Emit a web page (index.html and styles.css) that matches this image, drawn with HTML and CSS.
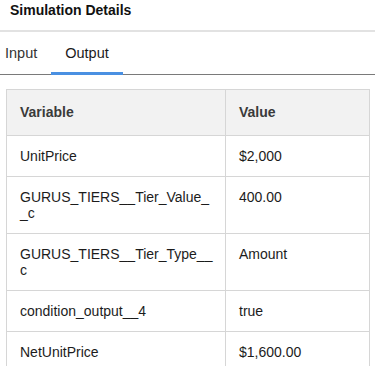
FILE: index.html
```html
<!DOCTYPE html>
<html lang="en">

<head>
    <meta charset="UTF-8">
    <meta name="viewport" content="width=device-width, initial-scale=1.0">
    <title>Simulation Details</title>
    <link rel="stylesheet" href="styles.css">
</head>

<body>

    <div class="panel-header">Simulation Details</div>

    <div class="tab-container">
        <span class="tab">Input</span>
        <span class="tab active">Output</span>
    </div>

    <table class="result-table">
        <thead>
            <tr>
                <th class="col-var">Variable</th>
                <th>Value</th>
            </tr>
        </thead>
        <tbody>
            <tr>
                <td>UnitPrice</td>
                <td>$2,000</td>
            </tr>
            <tr>
                <td>GURUS_TIERS__Tier_Value__c</td>
                <td>400.00</td>
            </tr>
            <tr>
                <td>GURUS_TIERS__Tier_Type__c</td>
                <td>Amount</td>
            </tr>
            <tr>
                <td>condition_output__4</td>
                <td>true</td>
            </tr>
            <tr>
                <td>NetUnitPrice</td>
                <td>$1,600.00</td>
            </tr>
        </tbody>
    </table>

</body>

</html>
```

FILE: styles.css
```css
body {
    font-family: "Liberation Sans", Arial, sans-serif;
    margin: 0;
    color: #1c1c1c;
    background: #fff;
    font-size: 14px;
}

.panel-header {
    font-weight: bold;
    font-size: 14px;
    line-height: 20px;
    color: #111;
    padding: 0 10px 10px;
    border-bottom: 2px solid #e2e2e2;
}

.tab-container {
    display: flex;
    padding-left: 5px;
    border-bottom: 1px solid #7a7a7a;
}

.tab {
    font-size: 14.5px;
    line-height: 20px;
    padding: 11px 14px 9px;
    color: #333;
    border-bottom: 3px solid transparent;
    margin-bottom: -1px;
    cursor: pointer;
}

.tab:first-child {
    padding-left: 0;
}

.tab.active {
    color: #1a1a1a;
    border-bottom-color: #4a90e2;
}

.result-table {
    margin: 14px 0 0 6px;
    width: 364px;
    border-collapse: collapse;
    table-layout: fixed;
    border: 1px solid #d6d6d6;
}

.result-table th,
.result-table td {
    box-sizing: border-box;
    border: 1px solid #d6d6d6;
    text-align: left;
    vertical-align: top;
    line-height: 16px;
    padding: 12px 13px;
    word-break: break-all;
}

.result-table th {
    background: #f2f2f2;
    color: #3a3a3a;
    font-weight: bold;
    padding-top: 14px;
    padding-bottom: 15px;
}

.result-table .col-var {
    width: 219px;
}

.result-table td:first-child {
    padding-right: 10px;
}
```
